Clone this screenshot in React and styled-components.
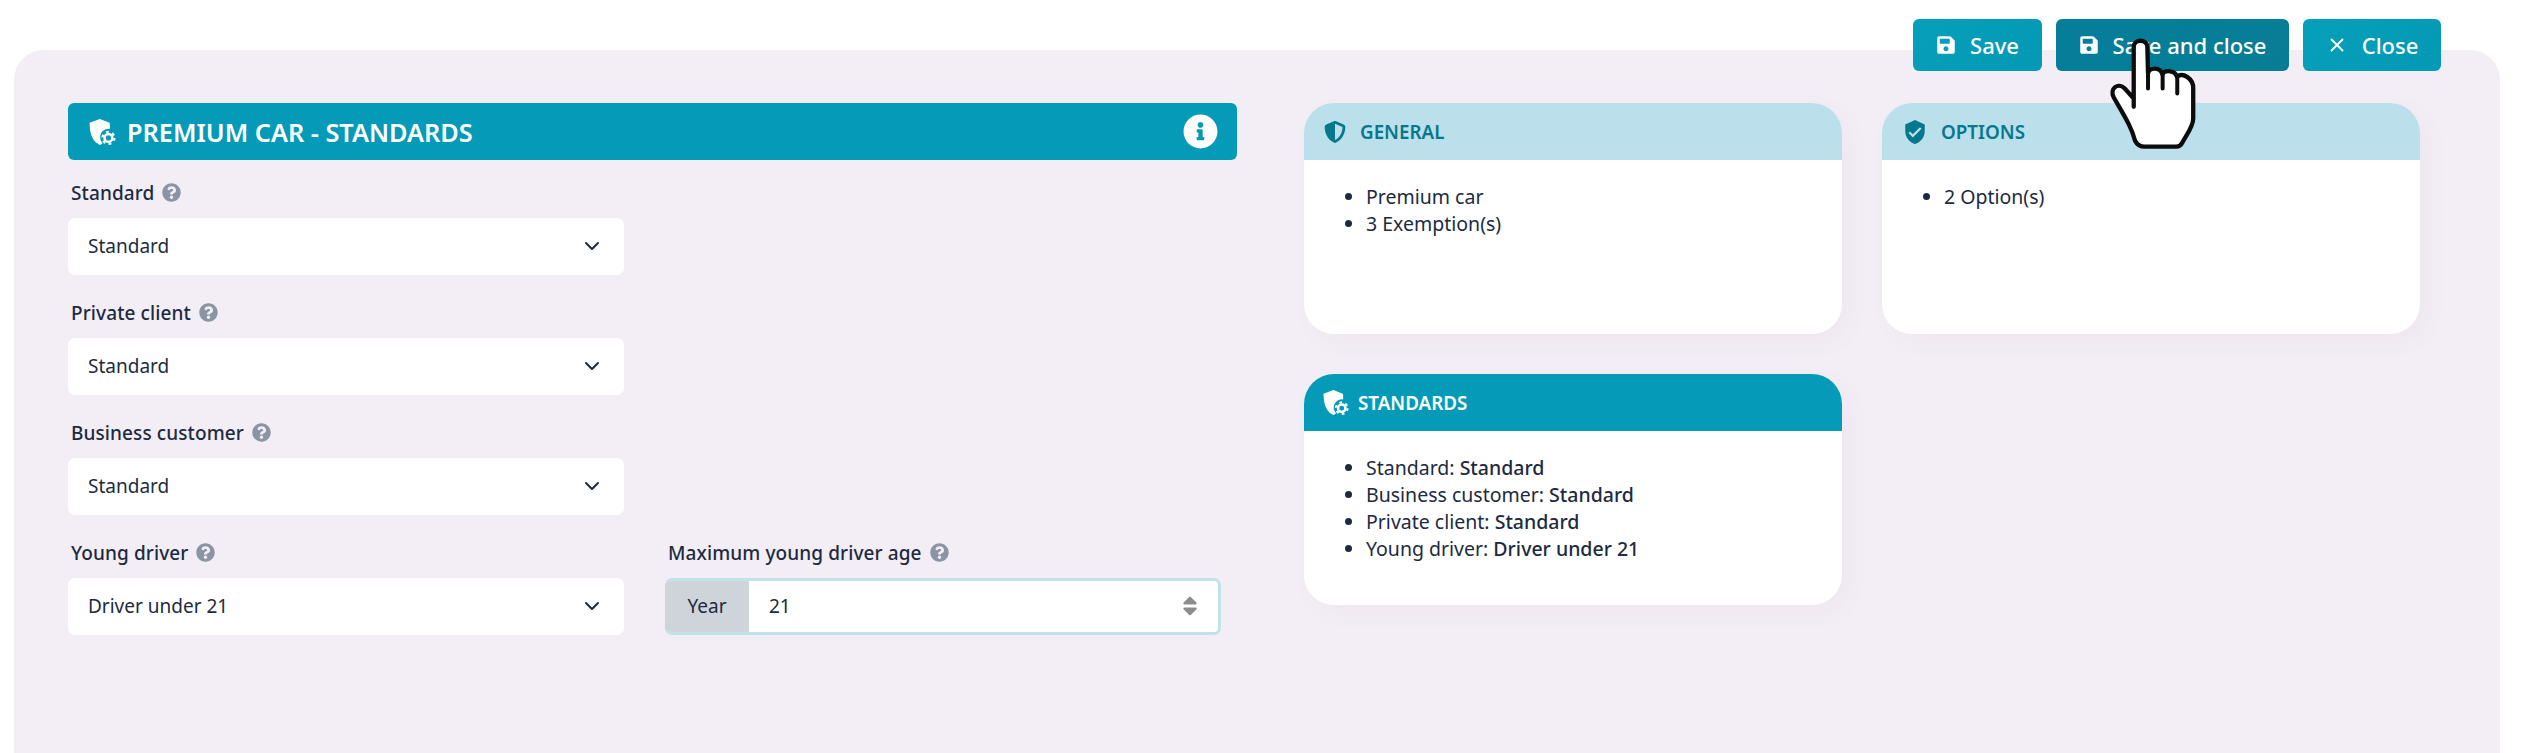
import React from "react";
import styled, { createGlobalStyle } from "styled-components";
import { FaSave, FaInfoCircle, FaQuestionCircle, FaSort } from "react-icons/fa";
import { FaShieldHalved } from "react-icons/fa6";
import { MdVerifiedUser } from "react-icons/md";
import { ChevronDown, X } from "lucide-react";

const Global = createGlobalStyle`
  html, body { margin: 0; padding: 0; background: #fff; height: 100%; }
  body { font-family: "Noto Sans", "Lato", sans-serif; color: #1d2a3f; overflow: hidden; }
`;

const Page = styled.div`
  position: relative;
  width: 2526px;
  height: 753px;
  overflow: hidden;
  display: flex;
  flex-direction: column;
  background: #fff;
`;

const Toolbar = styled.div`
  position: relative;
  z-index: 2;
  display: flex;
  justify-content: flex-end;
  gap: 14px;
  padding: 19px 85px 0 0;
`;

const ActionButton = styled.button`
  height: 52px;
  width: ${(p) => p.$w}px;
  border: 0;
  border-radius: 6px;
  background: ${(p) => (p.$active ? "linear-gradient(135deg,#067e9a,#077d95)" : "linear-gradient(135deg,#069fba,#0499b5)")};
  color: #fff;
  display: flex;
  align-items: center;
  justify-content: center;
  gap: 14px;
  font: 500 22px "Noto Sans", sans-serif;
  padding: 0;
`;

const Panel = styled.main`
  flex: 1;
  margin: -21px 26px 0 14px;
  background: #f3edf5;
  border-radius: 30px 30px 0 0;
  padding: 53px 0 0 54px;
  display: grid;
  grid-template-columns: 1169px 1114px;
  column-gap: 67px;
  align-content: start;
`;

const TitleBar = styled.header`
  height: 57px;
  box-sizing: border-box;
  background: #059bb8;
  border-radius: 6px;
  color: #fff;
  display: flex;
  align-items: center;
  padding: 0 19px 0 20px;
  gap: 11px;
  font-size: 25.3px;
  font-weight: 600;
`;

const Spacer = styled.span`
  flex: 1;
`;

const FormGrid = styled.div`
  display: grid;
  grid-template-columns: 556px 556px;
  column-gap: 41px;
  row-gap: 23px;
  margin-top: 18px;
`;

const Field = styled.div`
  grid-column: ${(p) => p.$col || "auto"};
  display: flex;
  flex-direction: column;
`;

const Label = styled.label`
  display: flex;
  align-items: center;
  gap: 8px;
  height: 29px;
  margin: 0 0 11px 3px;
  font-size: 19px;
  font-weight: 500;
  letter-spacing: 0.1px;
  color: #1d2a3f;
  svg { color: #8b94a3; }
`;

const Select = styled.div`
  height: 57px;
  box-sizing: border-box;
  background: #fff;
  border-radius: 7px;
  display: flex;
  align-items: center;
  justify-content: space-between;
  padding: 0 20px 2px 20px;
  font-size: 19px;
`;

const NumberGroup = styled.div`
  height: 57px;
  box-sizing: border-box;
  display: flex;
  border: 3px solid #bfe3e6;
  border-left: 0;
  border-radius: 7px;
  overflow: hidden;
  background: #fff;
  width: 556px;
`;

const Addon = styled.span`
  width: 84px;
  padding-bottom: 2px;
  box-sizing: border-box;
  background: #cfd3da;
  display: flex;
  align-items: center;
  justify-content: center;
  font-size: 19px;
`;

const NumberValue = styled.div`
  flex: 1;
  display: flex;
  align-items: center;
  justify-content: space-between;
  padding: 0 16px 1px 20px;
  font-size: 19px;
  svg { color: #8d8d8d; }
`;

const Cards = styled.section`
  display: grid;
  grid-template-columns: 538px 538px;
  grid-auto-rows: 231px;
  gap: 40px 40px;
`;

const Card = styled.article`
  background: #fff;
  border-radius: 30px;
  overflow: hidden;
  box-shadow: 8px 8px 24px rgba(120, 110, 140, 0.04);
`;

const CardHead = styled.h3`
  margin: 0;
  height: 57px;
  box-sizing: border-box;
  display: flex;
  align-items: center;
  gap: ${(p) => p.$gap || 10}px;
  padding: 0 0 0 ${(p) => p.$pad || 20}px;
  background: ${(p) => (p.$solid ? "#059bb8" : "#bbdfeb")};
  color: ${(p) => (p.$solid ? "#fff" : "#06788c")};
  font-size: 18.8px;
  font-weight: 600;
`;

const List = styled.ul`
  margin: 23px 0 0;
  padding: 0 0 0 62px;
  list-style: disc;
  font-size: 19.5px;
  line-height: 27px;
  color: #1d2a3f;
  b { font-weight: 500; }
`;

const Pointer = styled.svg`
  position: absolute;
  z-index: 5;
  left: 2108px;
  top: 37px;
  pointer-events: none;
`;

const ShieldCog = ({ size = 26, gear = "#059bb8" }) => (
  <svg width={size} height={size} viewBox="0 0 26 26" fill="none">
    <path d="M11 1 L20 4.5 C20.5 6.5 20.5 8 20.3 10 A8 8 0 0 0 11.5 20 L13.5 23.6 L11 25 C5 22.5 1.5 16 1.5 4.5 Z" fill="currentColor" />
    <circle cx="19" cy="18.5" r="4.6" stroke={gear} strokeWidth="2" fill="none" />
    <circle cx="19" cy="18.5" r="3.6" stroke="currentColor" strokeWidth="2.4" />
    <circle cx="19" cy="18.5" r="5.6" stroke="currentColor" strokeWidth="2" strokeDasharray="2.6 3.26" />
  </svg>
);

const Help = () => <FaQuestionCircle size={19} />;

const selects = [
  ["Standard", "Standard"],
  ["Private client", "Standard"],
  ["Business customer", "Standard"],
];

export default function App() {
  return (
    <Page>
      <Global />
      <Toolbar>
        <ActionButton $w={129}><FaSave size={20} />Save</ActionButton>
        <ActionButton $w={233} $active><FaSave size={20} />Save and close</ActionButton>
        <ActionButton $w={138}><X size={22} strokeWidth={2} />Close</ActionButton>
      </Toolbar>
      <Panel>
        <div>
          <TitleBar>
            <ShieldCog size={28} />
            <span>PREMIUM CAR - STANDARDS</span>
            <Spacer />
            <FaInfoCircle size={35} />
          </TitleBar>
          <FormGrid>
            {selects.map(([label, value]) => (
              <Field key={label} $col="1">
                <Label>{label} <Help /></Label>
                <Select>{value}<ChevronDown size={24} strokeWidth={2} /></Select>
              </Field>
            ))}
            <Field $col="1">
              <Label>Young driver <Help /></Label>
              <Select>Driver under 21<ChevronDown size={24} strokeWidth={2} /></Select>
            </Field>
            <Field $col="2">
              <Label>Maximum young driver age <Help /></Label>
              <NumberGroup>
                <Addon>Year</Addon>
                <NumberValue>21<FaSort size={24} /></NumberValue>
              </NumberGroup>
            </Field>
          </FormGrid>
        </div>
        <Cards>
          <Card>
            <CardHead $gap={14}><FaShieldHalved size={22} />GENERAL</CardHead>
            <List>
              <li>Premium car</li>
              <li>3 Exemption(s)</li>
            </List>
          </Card>
          <Card>
            <CardHead $gap={13}><MdVerifiedUser size={26} />OPTIONS</CardHead>
            <List>
              <li>2 Option(s)</li>
            </List>
          </Card>
          <Card>
            <CardHead $solid $pad={18} $gap={9}><ShieldCog size={27} />STANDARDS</CardHead>
            <List>
              <li>Standard: <b>Standard</b></li>
              <li>Business customer: <b>Standard</b></li>
              <li>Private client: <b>Standard</b></li>
              <li>Young driver: <b>Driver under 21</b></li>
            </List>
          </Card>
        </Cards>
      </Panel>
      <Pointer width="91" height="113" viewBox="175 80 273 340" aria-hidden="true">
        <path
          d="M252 290 L252 110 C252 85 292 85 293 110 L295 190 C298 170 332 170 338 192 C345 178 378 180 382 200 C400 185 432 205 431 235 L431 325 C431 350 410 375 398 398 C394 406 388 410 380 410 L285 410 C272 410 262 404 256 392 C245 350 225 320 192 262 C178 235 205 215 225 235 L252 265"
          fill="#fff"
          stroke="#0c0c0c"
          strokeWidth="13"
          strokeLinejoin="round"
          strokeLinecap="round"
        />
        <path d="M295 190 V235 M339 192 V235 M383 202 V250" stroke="#0c0c0c" strokeWidth="12" strokeLinecap="round" fill="none" />
      </Pointer>
    </Page>
  );
}
